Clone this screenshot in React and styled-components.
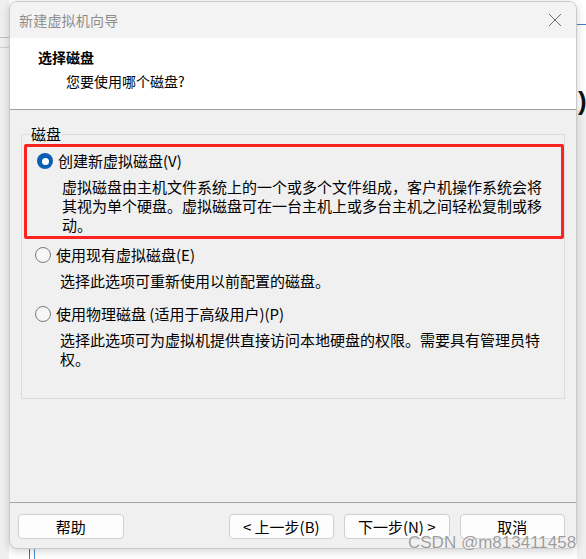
import React from "react";
import styled, { createGlobalStyle } from "styled-components";

const Global = createGlobalStyle`
  html, body { margin: 0; padding: 0; }
  body {
    width: 586px; height: 559px; overflow: hidden;
    background: #eeeeee;
    font-family: "Noto Sans CJK SC", "Microsoft YaHei", sans-serif;
    color: #000;
  }
  #root { position: relative; width: 586px; height: 559px; }
`;

const Desktop = styled.div`
  position: relative;
  width: 586px;
  height: 559px;
  padding: 1px 0 0 9px;
  box-sizing: border-box;
  background: linear-gradient(to right, #f0f0f0 0 9px, #ffffff 9px);
`;

const BackLine = styled.div`
  position: absolute;
  left: ${(p) => p.$x}px;
  top: ${(p) => p.$y}px;
  width: ${(p) => p.$w}px;
  height: ${(p) => p.$h}px;
  background: ${(p) => p.$c};
`;

const BackGlyph = styled.div`
  position: absolute;
  left: 578px;
  top: 86px;
  font: 700 26px "Liberation Sans", sans-serif;
  color: #111;
`;

const Window = styled.div`
  position: relative;
  width: 568px;
  height: 548px;
  box-sizing: border-box;
  border: 1px solid #c9c9c9;
  border-radius: 8px;
  overflow: hidden;
  background: #f0f0f0;
  box-shadow: 0 2px 10px rgba(0, 0, 0, 0.18);
  display: flex;
  flex-direction: column;
`;

const TitleBar = styled.div`
  height: 36px;
  flex: none;
  background: #f3f3f3;
  display: flex;
  align-items: center;
  justify-content: space-between;
  padding: 0 14px 0 9px;
`;

const TitleText = styled.span`
  font-size: 14px;
  color: #8d8d8d;
  letter-spacing: 0.2px;
`;

const CloseBtn = styled.span`
  display: flex;
  width: 14px;
  height: 14px;
`;

const Header = styled.div`
  height: 72px;
  flex: none;
  background: #ffffff;
  border-bottom: 1px solid #a0a0a0;
  padding: 9px 0 0 28px;
  box-sizing: border-box;
`;

const HeaderTitle = styled.div`
  font-size: 14px;
  font-weight: 700;
  line-height: 20px;
`;

const HeaderSub = styled.div`
  font-size: 14px;
  line-height: 20px;
  margin: 4px 0 0 28px;
`;

const Body = styled.div`
  flex: 1;
  padding: 14px 11px 0 11px;
`;

const Group = styled.fieldset`
  margin: 0;
  padding: 0;
  min-width: 0;
  height: 275px;
  box-sizing: border-box;
  border: 1px solid #dcdcdc;
  border-radius: 0;
`;

const Legend = styled.legend`
  margin-left: 8px;
  padding: 0 1px;
  font-size: 15px;
  line-height: 20px;
`;

const Highlight = styled.div`
  margin: 0 0 0 2px;
  border: 3px solid #ff2222;
  border-radius: 2px;
  padding: 4px 8px 2px 10px;
`;

const Option = styled.div`
  padding: 0 0 0 13px;
  margin-top: ${(p) => p.$mt || 0}px;
`;

const OptionRow = styled.label`
  display: flex;
  align-items: center;
  gap: 5px;
  font-size: 15px;
  line-height: 20px;
  height: 20px;
`;

const Radio = styled.span`
  width: 16px;
  height: 16px;
  box-sizing: border-box;
  border-radius: 50%;
  flex: none;
  background: ${(p) => (p.$checked ? "#0a5fb4" : "#f6f6f6")};
  border: ${(p) => (p.$checked ? "none" : "1px solid #7a7a7a")};
  display: flex;
  align-items: center;
  justify-content: center;
  &::after {
    content: "";
    display: ${(p) => (p.$checked ? "block" : "none")};
    width: 7px;
    height: 7px;
    border-radius: 50%;
    background: #fff;
  }
`;

const Desc = styled.div`
  font-size: 15px;
  line-height: 19px;
  margin: ${(p) => p.$mt}px 0 0 25px;
`;

const Footer = styled.div`
  height: 46px;
  flex: none;
  border-top: 1px solid #a5a5a5;
  box-sizing: border-box;
  display: flex;
  align-items: flex-start;
  padding: 11px 11px 0 8px;
`;

const Button = styled.button`
  width: 106px;
  height: 25px;
  box-sizing: border-box;
  margin-left: ${(p) => p.$ml || 0}px;
  border: 1px solid #d0d0d0;
  border-radius: 4px;
  background: #fdfdfd;
  font-family: "Noto Sans CJK SC", sans-serif;
  font-size: 15px;
  line-height: 20px;
  padding: 0;
  color: #000;
`;

const Watermark = styled.div`
  position: absolute;
  left: 408px;
  top: 533px;
  font: 17px "Liberation Sans", Arial, sans-serif;
  line-height: 20px;
  color: #9c9c9c;
  text-shadow: 0 0 1px #fff, 0 0 1px #fff;
  white-space: nowrap;
`;

export default function App() {
  return (
    <>
      <Global />
      <Desktop>
        <BackLine $x={0} $y={37} $w={9} $h={1} $c="#bdbdbd" />
        <BackLine $x={0} $y={47} $w={9} $h={1} $c="#cfcfcf" />
        <BackLine $x={577} $y={24} $w={9} $h={1} $c="#3b7fd0" />
        <BackLine $x={577} $y={110} $w={9} $h={449} $c="#f0f0f0" />
        <BackLine $x={29} $y={549} $w={1} $h={10} $c="#5a6f8a" />
        <BackLine $x={34} $y={549} $w={1} $h={10} $c="#4a8fd0" />
        <BackGlyph>)</BackGlyph>
        <Window>
          <TitleBar>
            <TitleText>新建虚拟机向导</TitleText>
            <CloseBtn>
              <svg width="14" height="14" viewBox="0 0 14 14">
                <path d="M1 1 L13 13 M13 1 L1 13" stroke="#6b6b6b" strokeWidth="1" fill="none" />
              </svg>
            </CloseBtn>
          </TitleBar>
          <Header>
            <HeaderTitle>选择磁盘</HeaderTitle>
            <HeaderSub>您要使用哪个磁盘?</HeaderSub>
          </Header>
          <Body>
            <Group>
              <Legend>磁盘</Legend>
              <Highlight>
                <OptionRow>
                  <Radio $checked />
                  创建新虚拟磁盘(V)
                </OptionRow>
                <Desc $mt={6}>
                  虚拟磁盘由主机文件系统上的一个或多个文件组成，客户机操作系统会将
                  <br />
                  其视为单个硬盘。虚拟磁盘可在一台主机上或多台主机之间轻松复制或移
                  <br />
                  动。
                </Desc>
              </Highlight>
              <Option $mt={6}>
                <OptionRow>
                  <Radio />
                  使用现有虚拟磁盘(E)
                </OptionRow>
                <Desc $mt={6}>选择此选项可重新使用以前配置的磁盘。</Desc>
              </Option>
              <Option $mt={14}>
                <OptionRow>
                  <Radio />
                  使用物理磁盘 (适用于高级用户)(P)
                </OptionRow>
                <Desc $mt={6}>
                  选择此选项可为虚拟机提供直接访问本地硬盘的权限。需要具有管理员特
                  <br />
                  权。
                </Desc>
              </Option>
            </Group>
          </Body>
          <Footer>
            <Button>帮助</Button>
            <Button $ml={105}>&lt; 上一步(B)</Button>
            <Button $ml={10}>下一步(N) &gt;</Button>
            <Button $ml={10}>取消</Button>
          </Footer>
        </Window>
        <Watermark>CSDN @m813411458</Watermark>
      </Desktop>
    </>
  );
}
